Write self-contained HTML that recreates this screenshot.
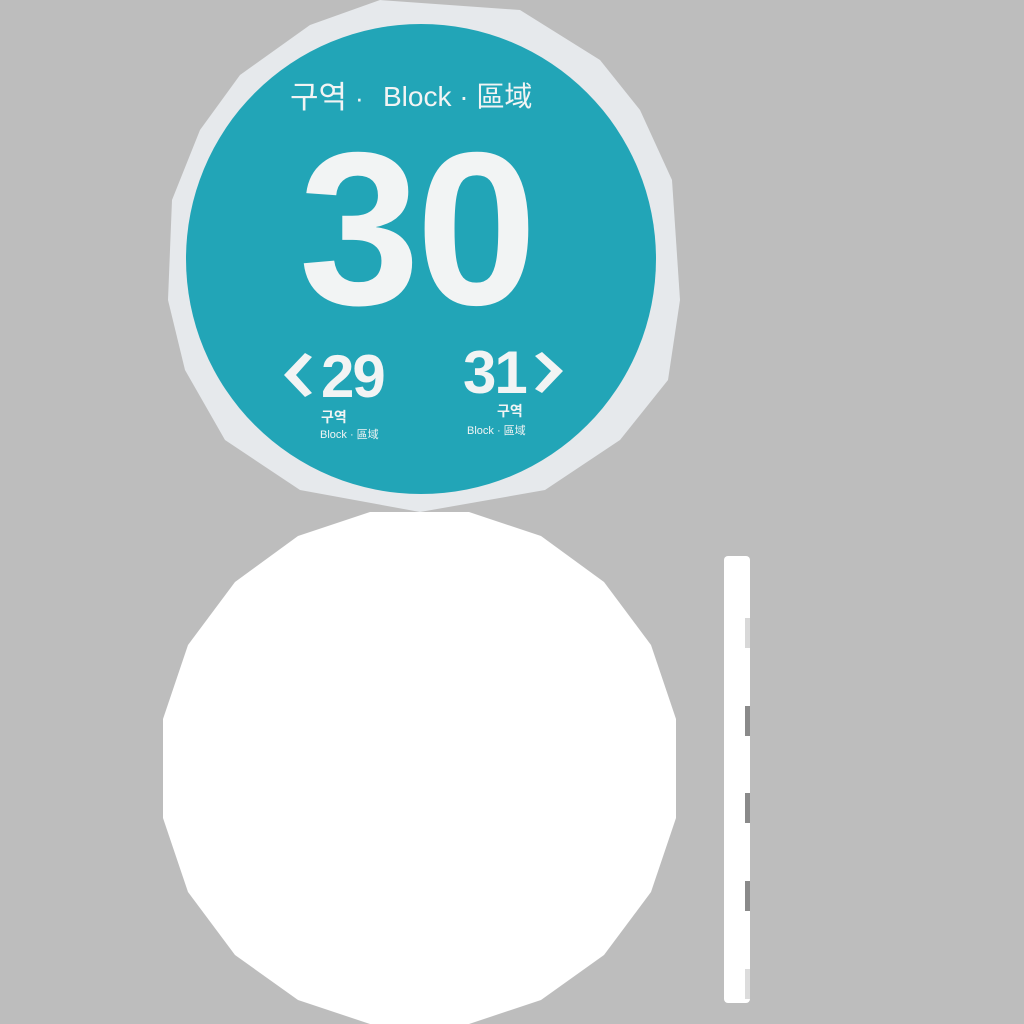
<!DOCTYPE html>
<html><head><meta charset="utf-8"><style>
html,body{margin:0;padding:0;background:#bdbdbd;width:1024px;height:1024px;overflow:hidden}
svg{display:block}
text{font-family:"Liberation Sans","Noto Sans CJK KR",sans-serif;fill:#f2f4f4}
</style></head><body>
<svg width="1024" height="1024" viewBox="0 0 1024 1024">
<rect width="1024" height="1024" fill="#bdbdbd"/>
<polygon points="380,0 520,10 600,60 640,110 672,180 680,300 668,380 620,440 545,490 420,512 300,490 225,440 185,370 168,300 172,200 200,130 240,75 310,25" fill="#e6e9ec"/>
<circle cx="421" cy="259" r="235" fill="#22a5b7"/>
<text x="290" y="108" font-size="31">구역</text>
<text x="355" y="107" font-size="26">·</text>
<text x="383" y="106" font-size="28">Block · 區域</text>
<text x="416" y="304" font-size="218" font-weight="bold" text-anchor="middle" letter-spacing="-4">30</text>
<polygon points="305,353 284,375 305,397 312,393 296,375 312,357" fill="#f2f4f4"/>
<text x="321" y="397" font-size="60" font-weight="bold" letter-spacing="-2">29</text>
<text x="321" y="422" font-size="14" font-weight="bold">구역</text>
<text x="320" y="438" font-size="11">Block · 區域</text>
<text x="463" y="393" font-size="60" font-weight="bold" letter-spacing="-2">31</text>
<polygon points="542,352 563,371 542,393 535,389 551,371 535,356" fill="#f2f4f4"/>
<text x="497" y="416" font-size="14" font-weight="bold">구역</text>
<text x="467" y="434" font-size="11">Block · 區域</text>
<polygon points="370,512 469,512 541,536 604,582 651,645 676,719 676,818 651,892 604,955 541,1000 469,1024 370,1024 298,1000 235,955 188,892 163,818 163,719 188,645 235,582 298,536" fill="#ffffff"/>
<rect x="724" y="556" width="26" height="447" rx="4" fill="#ffffff"/>
<rect x="745" y="618" width="5" height="30" fill="#d8d8d8"/>
<rect x="745" y="706" width="5" height="30" fill="#8a8a8a"/>
<rect x="745" y="793" width="5" height="30" fill="#8a8a8a"/>
<rect x="745" y="881" width="5" height="30" fill="#8a8a8a"/>
<rect x="745" y="969" width="5" height="30" fill="#dcdcdc"/>
</svg>
</body></html>
